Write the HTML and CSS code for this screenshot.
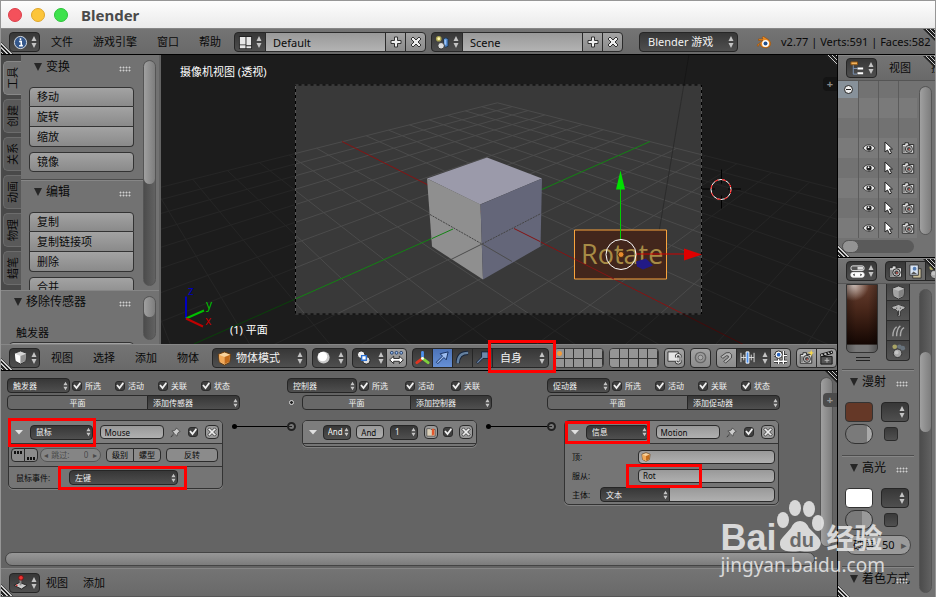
FILE: index.html
```html
<!DOCTYPE html>
<html lang="zh-CN">
<head>
  <meta charset="UTF-8">
  <meta name="viewport" content="width=device-width, initial-scale=1.0">
  <title>Blender</title>
  <link rel="stylesheet" href="styles.css">
</head>
<body>
  <!-- Icon sprites -->
  <svg class="sprites" aria-hidden="true">
    <symbol id="updown" viewBox="0 0 6 14"><path d="M3 1 5.5 6h-5zM3 13 .5 8h5z" fill="#c4c4c4"/></symbol>
    <symbol id="info" viewBox="0 0 16 16"><circle cx="8" cy="8" r="6.5" fill="#35588c" stroke="#d8dfe8"/><path d="M6.5 7h2.300v4h1.200M6.500 11.500h4M8 3.500v2" fill="none" stroke="#fff" stroke-width="1.600"/></symbol>
    <symbol id="screens" viewBox="0 0 16 16"><path d="M1 1h14v14H1z" fill="#222"/><path d="M2 2h6v8H2zM2 11h6v3H2zM9 2h5v9H9zM9 12h5v2H9z" fill="#e8e8e8"/></symbol>
    <symbol id="scene" viewBox="0 0 16 16"><circle cx="4" cy="4" r="3" fill="#c9c157" opacity=".8"/><circle cx="4" cy="4" r="1.500" fill="#fff8b0"/><path d="M9 4q2.500-2 5 0v8q-2.500 2-5 0z" fill="#4b82c8" stroke="#234"/><path d="M10 4.500q1 1 2 0v6h-2z" fill="#9cc3f2"/><circle cx="6.500" cy="11.500" r="3.500" fill="#ddd" stroke="#333"/></symbol>
    <symbol id="world" viewBox="0 0 16 16"><circle cx="4" cy="4" r="2.500" fill="#a9a566"/><circle cx="9" cy="4" r="2.500" fill="#68737c"/><circle cx="12.500" cy="5.500" r="2.500" fill="#68737c"/><circle cx="7" cy="11" r="4.500" fill="#a8a8a8" stroke="#333"/><circle cx="6" cy="10" r="2" fill="#c4c4c4"/></symbol>
    <symbol id="plus" viewBox="0 0 12 12"><path d="M4.500 1h3v3.500H11v3H7.500V11h-3V7.500H1v-3h3.500z" fill="#eee" stroke="#333"/></symbol>
    <symbol id="cross" viewBox="0 0 12 12"><path d="M3 1 6 4l3-3 2 2-3 3 3 3-2 2-3-3-3 3-2-2 3-3-3-3z" fill="#eee" stroke="#333"/></symbol>
    <symbol id="logo" viewBox="0 0 16 14"><path d="M1 10 7 5.500H2.500V4H7L6 2.500 7.500 1.500 13 5q3 3 1 6-3 3-7 1.500-3-1.500-3-4L2 11.500z" fill="#e98a24" stroke="#8d4a0b" stroke-width=".6"/><circle cx="9.500" cy="8.500" r="3.500" fill="#fff"/><circle cx="9.500" cy="8.500" r="2" fill="#23508c"/></symbol>
    <symbol id="cube" viewBox="0 0 16 16"><path d="M8 1l6.500 2.500L13.500 12 8 15l-5.500-3L1.500 3.500z" fill="#d5d5d5" stroke="#333"/><path d="M2 4l6 2.500V14l-5-2.500z" fill="#fff"/><path d="M14 4 8 6.500V14l5-2.500z" fill="#909090"/></symbol>
    <symbol id="cube-grey" viewBox="0 0 16 16"><path d="M8 1l6.500 2.500L13.500 12 8 15l-5.500-3L1.500 3.500z" fill="#bdbdbd" stroke="#333"/><path d="M2 4l6 2.500V14l-5-2.500z" fill="#a3a3a3"/><path d="M14 4 8 6.500V14l5-2.500z" fill="#838383"/></symbol>
    <symbol id="cube-orange" viewBox="0 0 16 16"><path d="M8 1l6.500 2.500L13.500 12 8 15l-5.500-3L1.500 3.500z" fill="#f8d29c" stroke="#6b3a08"/><path d="M2 4l6 2.500V14l-5-2.500z" fill="#f2a958"/><path d="M14 4 8 6.500V14l5-2.500z" fill="#c26b1c"/></symbol>
    <symbol id="ball" viewBox="0 0 16 16"><circle cx="8" cy="8" r="6.500" fill="#c9c9c9"/><circle cx="7" cy="7" r="5" fill="#fff"/></symbol>
    <symbol id="pivot" viewBox="0 0 16 16"><circle cx="5.500" cy="5" r="4" fill="#eee" stroke="#222"/><circle cx="11" cy="11" r="4" fill="#ddd" stroke="#222"/><path d="M6 6h5v5H6z" fill="#fff" stroke="#2b6fd0" stroke-width="1.500"/></symbol>
    <symbol id="centers" viewBox="0 0 16 16"><g fill="#9cc0f0" stroke="#223c66"><circle cx="3" cy="3" r="1.500"/><circle cx="8" cy="3" r="1.500"/><circle cx="13" cy="3" r="1.500"/></g><path d="M.7 10.500 5 6.500v2.500h6V6.500l4.300 4L11 14.500V12H5v2.500z" fill="#fff" stroke="#222"/></symbol>
    <symbol id="axes" viewBox="0 0 16 16"><g stroke-width="3" stroke-linecap="round"><path d="M8 9V2.500" stroke="#4f92f0"/><path d="M8 9l-6 4.500" stroke="#e2341f"/><path d="M8 9l6 4.500" stroke="#7fd13b"/></g><circle cx="8" cy="9" r="1.500" fill="#fff"/></symbol>
    <symbol id="arrow" viewBox="0 0 16 16"><path d="M1.500 13 8 6.500 5.500 4l8.500-2-2 8.500L9.500 8 3 14.500z" fill="#9dbdf0" stroke="#152f5e"/></symbol>
    <symbol id="arc" viewBox="0 0 16 16"><path d="M3 14Q3 3 14 3" fill="none" stroke="#17243b" stroke-width="4.500"/><path d="M3 14Q3 3 14 3" fill="none" stroke="#64809f" stroke-width="2.500"/></symbol>
    <symbol id="scale" viewBox="0 0 16 16"><path d="M1.500 13 7 7.500V2h7v7H8.500L3 14.500z" fill="#6f89aa" stroke="#17243b"/></symbol>
    <symbol id="lock" viewBox="0 0 16 16"><path d="M1 2h11v10H1z" fill="#e4e4e4" stroke="#333"/><path d="M10 8V6q2-2 4 0v2M10 12v1q2 2 4 0v-2" fill="none" stroke="#333" stroke-width="3"/><path d="M10 8V6q2-2 4 0v2M12 8v4M10 12v1q2 2 4 0v-2" fill="none" stroke="#eee" stroke-width="1.200"/></symbol>
    <symbol id="rings" viewBox="0 0 16 16"><circle cx="8" cy="8" r="5.500" fill="none" stroke="#666" stroke-width="1.500"/><circle cx="8" cy="8" r="2.500" fill="#aaa" stroke="#6c6c6c"/></symbol>
    <symbol id="magnet" viewBox="0 0 16 16"><path d="M2 7 7.500 3q4-1.500 6 2 1 4-3 6L7 14l-2-2 5-4q1-2-2-2L4 9z" fill="#b5b5b5" stroke="#444"/></symbol>
    <symbol id="snap" viewBox="0 0 16 16"><path d="M1 3v10M4 5v6M12 5v6M15 3v10M1 8h14" stroke="#ddd"/><path d="M6.500 2h3v12h-3z" fill="#4b90ee" stroke="#fff"/></symbol>
    <symbol id="grid-snap" viewBox="0 0 16 16"><path d="M6 1v14M11 1v14M1 6h14M1 12h14" stroke="#222" stroke-width="3"/><path d="M6 1v14M11 1v14M1 6h14M1 12h14" stroke="#fff" stroke-width="1.500"/><circle cx="6" cy="5" r="4" fill="#fff" stroke="#222"/><circle cx="6" cy="5" r="2" fill="#2a66c0"/></symbol>
    <symbol id="camera" viewBox="0 0 16 16"><path d="M1.500 4h3V2h4v2h6v10h-13z" fill="#ddd" stroke="#222"/><path d="M2 6h3v7H2z" fill="#888"/><circle cx="9" cy="9" r="4" fill="#bbb" stroke="#222"/><circle cx="9" cy="9" r="2.200" fill="#444"/><circle cx="9.500" cy="9.500" r="1" fill="#c9574f"/></symbol>
    <symbol id="render" viewBox="0 0 16 16"><use href="#camera" width="15" height="15" y="1"/><path d="M13 0l1 2.500 2 .5-2 1-1 3-1-3-3-1 3-.5z" fill="#f7d94a"/></symbol>
    <symbol id="clapper" viewBox="0 0 16 16"><path d="M2 7h12v8H2z" fill="#555" stroke="#111"/><path d="M1.500 4.500 14 1l.5 2.500L2 7z" fill="#eee" stroke="#111"/><path d="M4 4l2 2M8 3l2 2M11 2l2 2" stroke="#111" stroke-width="1.500"/><path d="M6 11h5M8.500 8.500v5" stroke="#bbb"/></symbol>
    <symbol id="tree" viewBox="0 0 16 16"><path d="M3.500 4v10h4M3.500 8h4" fill="none" stroke="#7b93b5"/><path d="M1 1h7v3H1z" fill="#f3b45e" stroke="#8a5010"/><path d="M8 7h6v2H8zM8 12h6v2H8z" fill="#fff"/></symbol>
    <symbol id="buttons" viewBox="0 0 16 16"><rect x="1" y="2" width="14" height="5" rx="2" fill="#555" stroke="#eee"/><rect x="8" y="3" width="6" height="3" fill="#ddd"/><rect x="1" y="9" width="14" height="5" rx="2" fill="#fff" stroke="#eee"/><path d="M5 10 3 11.500 5 13zM11 10l2 1.500-2 1.500z" fill="#333"/></symbol>
    <symbol id="photos" viewBox="0 0 16 16"><path d="M5 5h9v10H5z" fill="#c9bd97" stroke="#333"/><path d="M2 1h9v11H2z" fill="#d8e3f2" stroke="#333"/><circle cx="7" cy="5" r="2" fill="#527bb3"/><path d="M3 11l3-3 4 3z" fill="#555"/></symbol>
    <symbol id="monkey" viewBox="0 0 16 16"><path d="M4 3q4-3 8 0 3 0 3 2t-3 2l-2 2v5H7V9L5 7Q1 7 1 5t3-2z" fill="#b5b5b5" stroke="#333"/><path d="M6 5v1M10 5v1M8 8v5" stroke="#333"/></symbol>
    <symbol id="hair" viewBox="0 0 16 16"><path d="M2 14Q2 7 6 4M6 14q0-8 4-11M10 14q0-7 4-9" fill="none" stroke="#aaa" stroke-width="1.500"/></symbol>
    <symbol id="joystick" viewBox="0 0 16 16"><path d="M1 11l6-3 8 3-6 4z" fill="#ccc" stroke="#222"/><path d="M8 4v7" stroke="#888" stroke-width="2"/><circle cx="8.500" cy="3" r="2.500" fill="#e33" stroke="#711"/><circle cx="4" cy="11" r="1" fill="#d33"/></symbol>
    <symbol id="eye" viewBox="0 0 16 12"><path d="M1 6q7-8 14 0-7 8-14 0z" fill="#eee" stroke="#333"/><circle cx="8" cy="6" r="3" fill="#222"/><circle cx="7.500" cy="5" r="1" fill="#fff"/></symbol>
    <symbol id="pointer" viewBox="0 0 10 14"><path d="M1 1v10l2.500-2 2 4 2-1-2-4h3z" fill="#fff" stroke="#222"/></symbol>
    <symbol id="pin" viewBox="0 0 12 12"><path d="M7 1l4 4-1.500.5L8 7.500l-.5 2.500L5 7.500 1 11l3.500-4.500L2 4.500 4.500 4l2-1.500z" fill="#ccc" stroke="#333" stroke-width=".7"/></symbol>
    <symbol id="expand" viewBox="0 0 8 6"><path d="M0 1h8L4 5.500z" fill="#e0e0e0"/></symbol>
    <symbol id="bookmark" viewBox="0 0 12 12"><path d="M1 2h4l1 1h5v8H1z" fill="#dcd0b8" stroke="#555"/><path d="M7 2h3v9L8.500 9 7 11z" fill="#e2562a"/></symbol>
  </svg>

  <header class="titlebar">
    <span class="light close"></span>
    <span class="light minimize"></span>
    <span class="light zoom"></span>
    <h1>Blender</h1>
  </header>

  <nav class="bar info-bar">
    <button class="dark editor" aria-label="编辑器"><svg class="icon"><use href="#info"/></svg><svg class="updown"><use href="#updown"/></svg></button>
    <div class="menus">
      <a href="#">文件</a><a href="#">游戏引擎</a><a href="#">窗口</a><a href="#">帮助</a>
    </div>
    <div class="joined">
      <button class="dark editor" aria-label="屏幕"><svg class="icon"><use href="#screens"/></svg><svg class="updown"><use href="#updown"/></svg></button>
      <input class="name" type="text" value="Default" aria-label="屏幕名称">
      <button class="light-btn tool" aria-label="添加屏幕"><svg class="sign"><use href="#plus"/></svg></button>
      <button class="light-btn tool" aria-label="删除屏幕"><svg class="sign"><use href="#cross"/></svg></button>
    </div>
    <div class="joined">
      <button class="dark editor" aria-label="场景"><svg class="icon"><use href="#scene"/></svg><svg class="updown"><use href="#updown"/></svg></button>
      <input class="name" type="text" value="Scene" aria-label="场景名称">
      <button class="light-btn tool" aria-label="添加场景"><svg class="sign"><use href="#plus"/></svg></button>
      <button class="light-btn tool" aria-label="删除场景"><svg class="sign"><use href="#cross"/></svg></button>
    </div>
    <select class="drop engine" aria-label="引擎"><option>Blender 游戏</option></select>
    <svg class="logo"><use href="#logo"/></svg>
    <span class="stats">v2.77 | Verts:591 | Faces:582</span>
    <i class="corner top"></i><i class="corner bottom"></i>
  </nav>

  <main class="workspace">
    <div class="left">
      <section class="view3d">
        <aside class="shelf">
          <div class="tools">
            <div class="tabs">
              <button class="active">工具</button><button>创建</button><button>关系</button><button>动画</button><button>物理</button><button>蜡笔</button>
            </div>
            <div class="tool-panels">
              <div class="panel">
                <h2>变换<i class="grip"></i></h2>
                <div class="stack"><button>移动</button><button>旋转</button><button>缩放</button></div>
                <div class="stack"><button>镜像</button></div>
              </div>
              <div class="panel">
                <h2>编辑<i class="grip"></i></h2>
                <div class="stack"><button>复制</button><button>复制链接项</button><button>删除</button></div>
                <div class="stack"><button>合并</button></div>
              </div>
            </div>
            <div class="scroll"><i class="thumb tall"></i></div>
          </div>
          <div class="operator">
            <div class="operator-body">
              <h2>移除传感器<i class="grip"></i></h2>
              <p>触发器</p>
              <div class="stack"><button aria-label="触发器"></button></div>
            </div>
            <div class="scroll"><i class="thumb short"></i></div>
          </div>
        </aside>
        <div class="viewport">
          <svg class="scene" viewBox="161 55 676 290" preserveAspectRatio="xMidYMid slice">
            <g id="floor"></g>
            <path d="M689 55 656 250" stroke="#2c2c2c"/>
            <path d="M342 142 872 410" stroke="#861313"/>
            <path d="M650 142 194 344.500" stroke="#138313"/>
            <!-- Cube -->
            <path d="M487 158 542 179 480 205 427 179z" fill="#9b9aaa"/>
            <path d="M427 179 480.500 205 483 280 432 247z" fill="#8f8f8f"/>
            <path d="M542 179 480.500 205 483 280 540.500 247z" fill="#646679"/>
            <path d="M430 215 482 244.500 541 214" class="hidden-edge"/>
            <path d="M482 244.500 451 260M482 244.500 512 262" stroke="#4c4c4c"/>
            <path d="M453 229.500 432 239" stroke="#138313"/><path d="M514 229 540 242" stroke="#861313"/>
            <!-- Text object with the translate manipulator -->
            <path d="M574.500 230.500h92v49h-92z" fill="#42261c" stroke="#f8a33c"/>
            <text x="581" y="264" class="object-text">Rotate</text>
            <path d="M574.500 259.600 614 279.500" stroke="#861313"/>
            <path d="M636 262l10-3 7 7-10 4-6-3z" fill="#221a86"/>
            <circle cx="621" cy="255" r="3" fill="#e68a2e" stroke="#4a2a0a"/>
            <path d="M636 254.500h50" stroke="#d00000"/>
            <path d="M620.500 240v-52" stroke="#00d000"/><path d="M620.500 171l4.500 19h-9z" fill="#00e000"/>
            <circle cx="621" cy="255" r="15" fill="none" stroke="#fff"/>
            <!-- Area outside the camera frame -->
            <path d="M-400-400h1800v1200H-400zM295 85v230h407V85z" fill="#000" fill-opacity=".5" fill-rule="evenodd"/>
            <path d="M295.500 85.500h406v229h-406z" fill="none" stroke="#000"/>
            <path d="M295.500 85.500h406v229h-406z" fill="none" stroke="#555" stroke-dasharray="3 3"/>
            <path d="M684 249l18 6-18 6z" fill="#e00000"/>
            <!-- 3D cursor -->
            <path d="M721.500 170v14M721.500 196v13M702 189.500h13M728 189.500h13" stroke="#000"/>
            <circle cx="721" cy="190" r="10" fill="none" stroke="#fff"/>
            <circle cx="721" cy="190" r="10" fill="none" stroke="#f00" stroke-dasharray="4 4"/>
            <g stroke-width="2"><path d="M186 319v-22" stroke="#0000c0"/><path d="M186 319l18-8" stroke="#00c000"/><path d="M186 319l17 8" stroke="#c00000"/></g>
            <text x="188" y="295" class="axis" fill="#0000c0">z</text>
            <text x="206" y="309" class="axis" fill="#00c000">y</text>
            <text x="205" y="325" class="axis" fill="#c00000">x</text>
          </svg>
          <span class="view-name">摄像机视图 (透视)</span>
          <span class="object-name">(1) 平面</span>
          <button class="expander" aria-label="展开">+</button>
          <i class="corner top"></i>
        </div>
      </section>

      <nav class="bar view-bar">
        <button class="dark editor" aria-label="编辑器"><svg class="icon"><use href="#cube"/></svg><svg class="updown"><use href="#updown"/></svg></button>
        <div class="menus">
          <a href="#">视图</a><a href="#">选择</a><a href="#">添加</a><a href="#">物体</a>
        </div>
        <div class="mode"><svg class="icon"><use href="#cube-orange"/></svg><select class="drop" aria-label="模式"><option>物体模式</option></select></div>
        <button class="dark editor wide" aria-label="着色"><svg class="icon"><use href="#ball"/></svg><svg class="updown"><use href="#updown"/></svg></button>
        <div class="joined">
          <button class="dark editor wide" aria-label="轴心"><svg class="icon"><use href="#pivot"/></svg><svg class="updown"><use href="#updown"/></svg></button>
          <button class="light-btn tool" aria-label="中心点"><svg class="icon"><use href="#centers"/></svg></button>
        </div>
        <div class="joined">
          <button class="dark tool" aria-label="操纵器"><svg class="icon"><use href="#axes"/></svg></button>
          <button class="dark tool on" aria-label="移动"><svg class="icon"><use href="#arrow"/></svg></button>
          <button class="dark tool" aria-label="旋转"><svg class="icon"><use href="#arc"/></svg></button>
          <button class="dark tool" aria-label="缩放"><svg class="icon"><use href="#scale"/></svg></button>
          <span class="marked orientation"><select class="drop" aria-label="坐标系"><option>自身</option></select></span>
        </div>
        <div class="layers"><i class="used"></i><i></i><i></i><i></i><i></i><i></i><i></i><i></i><i></i><i></i></div>
        <div class="layers"><i></i><i></i><i></i><i></i><i></i><i></i><i></i><i></i><i></i><i></i></div>
        <button class="light-btn tool" aria-label="锁定"><svg class="icon"><use href="#lock"/></svg></button>
        <button class="light-btn tool" aria-label="衰减"><svg class="icon"><use href="#rings"/></svg></button>
        <div class="joined">
          <button class="light-btn tool" aria-label="吸附"><svg class="icon"><use href="#magnet"/></svg></button>
          <button class="dark editor wide" aria-label="吸附元素"><svg class="icon"><use href="#snap"/></svg><svg class="updown"><use href="#updown"/></svg></button>
          <button class="light-btn tool" aria-label="网格"><svg class="icon"><use href="#grid-snap"/></svg></button>
        </div>
        <div class="joined">
          <button class="light-btn tool" aria-label="渲染"><svg class="icon"><use href="#render"/></svg></button>
          <button class="light-btn tool" aria-label="动画"><svg class="icon"><use href="#clapper"/></svg></button>
        </div>
        <i class="corner bottom"></i>
      </nav>

      <section class="logic">
        <div class="logic-body">
          <div class="column sensors">
            <div class="filters">
              <select class="drop" aria-label="触发器"><option>触发器</option></select>
              <label><input type="checkbox" checked>所选</label><label><input type="checkbox" checked>活动</label><label><input type="checkbox" checked>关联</label><label><input type="checkbox" checked>状态</label>
            </div>
            <div class="adder">
              <button class="object">平面</button><select class="drop" aria-label="添加传感器"><option>添加传感器</option></select>
            </div>
            <div class="brick-row">
              <div class="brick">
                <div class="brick-head">
                  <svg class="expand"><use href="#expand"/></svg>
                  <span class="marked type"><select class="drop" aria-label="类型"><option>鼠标</option></select></span>
                  <input class="field" type="text" value="Mouse" aria-label="名称">
                  <svg class="pin"><use href="#pin"/></svg>
                  <input type="checkbox" checked aria-label="启用">
                  <button class="remove" aria-label="删除"><svg><use href="#cross"/></svg></button>
                </div>
                <div class="brick-line">
                  <div class="joined pulses"><button class="flat" aria-label="真脉冲"><i class="up"></i></button><button class="flat" aria-label="假脉冲"><i></i></button></div>
                  <label class="skip"><span>◂</span> 跳过:<input type="text" value="0"><span>▸</span></label>
                  <div class="joined levels"><button class="flat">级别</button><button class="flat">螺型</button></div>
                  <button class="flat invert">反转</button>
                </div>
                <div class="brick-line">
                  <label class="caption" for="event">鼠标事件:</label>
                  <span class="marked event"><select class="drop" id="event"><option>左键</option></select></span>
                </div>
              </div>
              <i class="link"></i>
            </div>
          </div>

          <div class="column controllers">
            <div class="filters">
              <select class="drop" aria-label="控制器"><option>控制器</option></select>
              <label><input type="checkbox" checked>所选</label><label><input type="checkbox" checked>活动</label><label><input type="checkbox" checked>关联</label>
            </div>
            <div class="adder">
              <i class="state"></i><button class="object">平面</button><select class="drop" aria-label="添加控制器"><option>添加控制器</option></select>
            </div>
            <div class="brick-row">
              <i class="socket"></i>
              <div class="brick">
                <div class="brick-head">
                  <svg class="expand"><use href="#expand"/></svg>
                  <select class="drop tiny" aria-label="类型"><option>And</option></select>
                  <input class="field tiny" type="text" value="And" aria-label="名称">
                  <select class="drop tiny" aria-label="状态"><option>1</option></select>
                  <button class="remove" aria-label="优先"><svg><use href="#bookmark"/></svg></button>
                  <input type="checkbox" checked aria-label="启用">
                  <button class="remove" aria-label="删除"><svg><use href="#cross"/></svg></button>
                </div>
              </div>
              <i class="link"></i>
            </div>
          </div>

          <div class="column actuators">
            <div class="filters">
              <select class="drop" aria-label="促动器"><option>促动器</option></select>
              <label><input type="checkbox" checked>所选</label><label><input type="checkbox" checked>活动</label><label><input type="checkbox" checked>关联</label><label><input type="checkbox" checked>状态</label>
            </div>
            <div class="adder">
              <button class="object">平面</button><select class="drop" aria-label="添加促动器"><option>添加促动器</option></select>
            </div>
            <div class="brick-row">
              <i class="socket"></i>
              <div class="brick">
                <div class="brick-head">
                  <svg class="expand"><use href="#expand"/></svg>
                  <span class="marked type message"><select class="drop" aria-label="类型"><option>信息</option></select></span>
                  <input class="field" type="text" value="Motion" aria-label="名称">
                  <svg class="pin"><use href="#pin"/></svg>
                  <input type="checkbox" checked aria-label="启用">
                  <button class="remove" aria-label="删除"><svg><use href="#cross"/></svg></button>
                </div>
                <div class="brick-form">
                  <div class="form-row"><label for="to">顶:</label><span class="target"><input class="field" id="to" type="text"><svg><use href="#cube-orange"/></svg></span></div>
                  <div class="form-row"><label for="subject">服从:</label><span class="marked subject"><input class="field" id="subject" type="text" value="Rot"></span></div>
                  <div class="form-row"><label for="kind">主体:</label><span class="joined message-body"><select class="drop" id="kind"><option>文本</option></select><input class="field" type="text" aria-label="主体"></span></div>
                </div>
              </div>
            </div>
          </div>
          <div class="scroll logic-scroll"><i class="thumb full"></i></div>
          <button class="expander" aria-label="展开">+</button>
          <i class="corner top"></i>
        </div>
        <div class="hscroll"></div>
        <nav class="bar logic-bar">
          <button class="dark editor" aria-label="编辑器"><svg class="icon"><use href="#joystick"/></svg><svg class="updown"><use href="#updown"/></svg></button>
          <div class="menus"><a href="#">视图</a><a href="#">添加</a></div>
          <i class="corner bottom"></i>
        </nav>
      </section>
    </div>

    <aside class="right">
      <nav class="bar side-bar">
        <button class="dark editor" aria-label="编辑器"><svg class="icon"><use href="#tree"/></svg><svg class="updown"><use href="#updown"/></svg></button>
        <div class="menus"><a href="#">视图</a><a href="#">搜索</a></div>
        <i class="corner top"></i>
      </nav>
      <section class="outliner">
        <div class="outline-rows">
          <div class="row root"><span><i class="collapse"></i></span><span></span><span></span><span></span></div>
          <div class="row"><span></span><span></span><span></span><span></span></div>
          <div class="row"><span></span><span></span><span></span><span></span></div>
          <div class="row"><span></span><span><svg><use href="#eye"/></svg></span><span><svg><use href="#pointer"/></svg></span><span><svg><use href="#camera"/></svg></span></div>
          <div class="row"><span></span><span><svg><use href="#eye"/></svg></span><span><svg><use href="#pointer"/></svg></span><span><svg><use href="#camera"/></svg></span></div>
          <div class="row"><span></span><span><svg><use href="#eye"/></svg></span><span><svg><use href="#pointer"/></svg></span><span><svg><use href="#camera"/></svg></span></div>
          <div class="row"><span></span><span><svg><use href="#eye"/></svg></span><span><svg><use href="#pointer"/></svg></span><span><svg><use href="#camera"/></svg></span></div>
          <div class="row"><span></span><span><svg><use href="#eye"/></svg></span><span><svg><use href="#pointer"/></svg></span><span><svg><use href="#camera"/></svg></span></div>
          <div class="outline-scroll"><i></i></div>
        </div>
        <div class="scroll"><i class="thumb full"></i></div>
        <i class="corner bottom"></i>
      </section>
      <nav class="bar side-bar">
        <button class="dark editor" aria-label="编辑器"><svg class="icon"><use href="#buttons"/></svg><svg class="updown"><use href="#updown"/></svg></button>
        <div class="joined contexts">
          <button class="dark tool" aria-label="渲染"><svg class="icon"><use href="#camera"/></svg></button>
          <button class="dark tool on-grey" aria-label="渲染层"><svg class="icon"><use href="#photos"/></svg></button>
          <button class="dark tool" aria-label="场景"><svg class="icon"><use href="#world"/></svg></button>
        </div>
        <i class="corner top"></i>
      </nav>
      <section class="properties">
        <div class="property-panels">
          <div class="preview-row">
            <div class="preview"></div>
            <div class="shapes">
              <button aria-label="立方体"><svg class="icon"><use href="#cube-grey"/></svg></button>
              <button aria-label="猴头"><svg class="icon"><use href="#monkey"/></svg></button>
              <button aria-label="毛发"><svg class="icon"><use href="#hair"/></svg></button>
              <button aria-label="天空"><svg class="icon"><use href="#world"/></svg></button>
            </div>
          </div>
          <i class="handle"></i>
          <div class="panel">
            <h2>漫射<i class="grip"></i></h2>
            <div class="swatches">
              <button class="swatch brown" aria-label="漫射颜色"></button>
              <button class="dark pick" aria-label="着色器"><svg class="updown"><use href="#updown"/></svg></button>
              <span class="slider diffuse"></span><input type="checkbox" aria-label="渐变">
            </div>
          </div>
          <div class="panel">
            <h2>高光<i class="grip"></i></h2>
            <div class="swatches">
              <button class="swatch white" aria-label="高光颜色"></button>
              <button class="dark pick" aria-label="着色器"><svg class="updown"><use href="#updown"/></svg></button>
              <span class="slider specular"></span><input type="checkbox" aria-label="渐变">
            </div>
            <label class="hardness">硬度:<input type="text" value="50"><span>▸</span></label>
          </div>
          <div class="panel">
            <h2>着色方式<i class="grip"></i></h2>
          </div>
        </div>
        <div class="scroll"><i class="thumb middle"></i></div>
        <i class="corner bottom"></i>
      </section>
    </aside>
  </main>

  <div class="watermark">
    <div class="brand">
      <span class="bai">Bai</span>
      <span class="paw">
        <svg viewBox="0 0 48 54"><ellipse cx="7" cy="21" rx="6" ry="8"/><ellipse cx="19" cy="9" rx="6" ry="8"/><ellipse cx="33" cy="10" rx="6" ry="8"/><ellipse cx="42" cy="24" rx="6" ry="8"/><path d="M24 22q6 0 9 7l9 9q5 6 1 11-4 5-19 3-15 2-19-3-3-6 2-11l8-9q3-7 9-7z"/></svg>
        <b>du</b>
      </span>
      <span class="jingyan">经验</span>
    </div>
    <span class="site">jingyan.baidu.com</span>
  </div>

  <script src="scene.js"></script>
</body>
</html>
```
FILE: styles.css
```css
* {
  box-sizing: border-box;
}

body {
  margin: 0;
  height: 100vh;
  display: flex;
  flex-direction: column;
  position: relative;
  border: 1px solid #969696;
  border-bottom: 0;
  background: #6b6b6b;
  color: #0a0a0a;
  font-family: "Noto Sans", "Noto Sans CJK SC", sans-serif;
  font-size: 11px;
  line-height: 16px;
  overflow: hidden;
}

button, input, select {
  margin: 0;
  padding: 0;
  border: 1px solid #2b2b2b;
  border-radius: 4px;
  color: inherit;
  font: inherit;
  appearance: none;
  min-width: 0;
}

a {
  color: inherit;
  text-decoration: none;
}

h1, h2, p {
  margin: 0;
}

button svg {
  display: block;
}

.sprites {
  position: absolute;
  width: 0;
  height: 0;
}

/* Window title */
.titlebar {
  height: 27px;
  flex: none;
  display: flex;
  align-items: center;
  gap: 9px;
  padding-left: 7px;
  background: linear-gradient(#fdfdfd, #eaeaea);
}

.titlebar h1 {
  margin-left: 4px;
  color: #4a4a4a;
  font-size: 15px;
  line-height: 20px;
}

.light {
  width: 14px;
  height: 14px;
  border-radius: 50%;
}

.close { background: #f4515b; border: 1px solid #dc3f4a; }
.minimize { background: #fcc53a; border: 1px solid #dfa52a; }
.zoom { background: #3ee24c; border: 1px solid #2cc43a; }

/* Shared header bars */
.bar {
  position: relative;
  display: flex;
  align-items: center;
  flex: none;
  height: 27px;
  background: linear-gradient(#747474, #696969);
  border-top: 1px solid #868686;
  border-bottom: 1px solid #000;
  padding-left: 8px;
  white-space: nowrap;
}

.info-bar {
  gap: 5px;
  padding-top: 1px;
}

.menus {
  display: flex;
  gap: 20px;
  padding: 0 10px 0 6px;
}

.info-bar .menus {
  padding-right: 8px;
}

.dark, .drop {
  background-color: #434343;
  background-image: linear-gradient(#373737, #4f4f4f);
  color: #f2f2f2;
  border-color: #262626;
}

.light-btn {
  background: linear-gradient(#a3a3a3, #8c8c8c);
}

.editor {
  display: flex;
  align-items: center;
  gap: 3px;
  flex: none;
  width: 31px;
  height: 20px;
  padding: 0 3px;
}

.editor.wide {
  width: 35px;
  gap: 7px;
}

.tool {
  display: flex;
  align-items: center;
  justify-content: center;
  flex: none;
  width: 21px;
  height: 20px;
}

.icon {
  width: 15px;
  height: 15px;
  flex: none;
}

.sign {
  width: 12px;
  height: 12px;
}

.updown {
  width: 6px;
  height: 14px;
  flex: none;
}

.joined {
  display: flex;
}

.joined > * + * {
  margin-left: -1px;
}

.joined > :not(:first-child) {
  border-top-left-radius: 0;
  border-bottom-left-radius: 0;
}

.joined > :not(:last-child) {
  border-top-right-radius: 0;
  border-bottom-right-radius: 0;
}

.drop {
  height: 20px;
  padding: 0 12px 0 8px;
  background-image: url("data:image/svg+xml,%3Csvg xmlns='http://www.w3.org/2000/svg' width='6' height='14'%3E%3Cpath d='M3 1 5.5 6h-5zM3 13 .5 8h5z' fill='%23c4c4c4'/%3E%3C/svg%3E"), linear-gradient(#373737, #4f4f4f);
  background-repeat: no-repeat;
  background-position: right 3px center, 0 0;
}

.name {
  width: 121px;
  height: 20px;
  padding-left: 7px;
  background: linear-gradient(#999, #b3b3b3);
}

.info-bar .joined .editor {
  width: 32px;
}

.engine {
  width: 99px;
  margin: 0 13px 0 11px;
}

.logo {
  width: 16px;
  height: 14px;
  flex: none;
}

.stats {
  margin-left: 4px;
}

/* Resize hatching in area corners */
.corner {
  position: absolute;
  width: 12px;
  height: 12px;
}

.corner.top {
  top: 0;
  right: 0;
  background: repeating-linear-gradient(45deg, #222 0 1px, #ccc 1px 2px, #222 2px 3px);
  clip-path: polygon(0 0, 100% 0, 100% 100%);
}

.corner.bottom {
  bottom: 0;
  left: 0;
  background: repeating-linear-gradient(45deg, #222 0 1px, #ccc 1px 2px, #222 2px 3px);
  clip-path: polygon(0 0, 100% 100%, 0 100%);
}

/* Workspace */
.workspace {
  display: flex;
  flex: 1;
  min-height: 0;
}

.left {
  flex: 1;
  min-width: 0;
  display: flex;
  flex-direction: column;
}

.right {
  width: 98px;
  flex: none;
  display: flex;
  flex-direction: column;
  border-left: 1px solid #000;
  overflow: hidden;
}

.view3d {
  flex: 1;
  min-height: 0;
  display: flex;
}

/* Tool shelf */
.shelf {
  width: 160px;
  flex: none;
  display: flex;
  flex-direction: column;
  background: #727272;
  border-right: 2px solid #636363;
  overflow: hidden;
}

.tools {
  flex: 1;
  min-height: 0;
  display: flex;
  padding-right: 3px;
}

.tabs {
  width: 20px;
  flex: none;
  padding: 6px 0 0 2px;
  display: flex;
  flex-direction: column;
  gap: 4px;
  background: #494949;
}

.tabs button {
  flex: none;
  height: 34px;
  background: #595959;
  border: 1px solid #6c6c6c;
  border-left: 0;
  border-radius: 0 5px 5px 0;
  writing-mode: vertical-rl;
  text-orientation: sideways;
  transform: rotate(180deg);
}

.tabs .active {
  background: #727272;
  border-color: #888;
}

.tool-panels {
  flex: 1;
  overflow: hidden;
}

.panel {
  padding: 3px 9px 7px 8px;
}

.tool-panels .panel + .panel {
  border-top: 1px solid #4c4c4c;
  box-shadow: inset 0 1px #868686;
}

h2 {
  position: relative;
  display: flex;
  align-items: center;
  font-size: 12px;
  font-weight: normal;
  line-height: 18px;
  white-space: nowrap;
}

h2::before {
  content: "";
  margin: 0 4px 0 5px;
  border: 4px solid transparent;
  border-top: 8px solid #262626;
  border-bottom: 0;
}

/* Drag dots lie over a long title */
.grip {
  position: absolute;
  right: 3px;
  top: 8px;
  width: 12px;
  height: 6px;
  background: radial-gradient(circle, #d0d0d0 30%, transparent 60%) 0 0 / 3px 3px;
}

.stack {
  display: flex;
  flex-direction: column;
  margin-top: 5px;
}

.panel h2 + .stack {
  margin-top: 11px;
}

.stack button {
  height: 20px;
  padding-left: 7px;
  text-align: left;
  border-color: #333;
  background: linear-gradient(#a3a3a3, #8a8a8a);
}

.stack button + button {
  border-top: 0;
}

.stack button:not(:first-child) {
  border-top-left-radius: 0;
  border-top-right-radius: 0;
}

.stack button:not(:last-child) {
  border-bottom-left-radius: 0;
  border-bottom-right-radius: 0;
}

.operator {
  height: 54px;
  flex: none;
  display: flex;
  padding-right: 3px;
  border-top: 1px solid #868686;
  overflow: hidden;
}

.operator-body {
  flex: 1;
  padding: 2px 9px 0 8px;
}

.operator p {
  margin: 14px 0 0 7px;
}

.operator .stack {
  margin-top: 1px;
}

/* Scroll bars */
.scroll {
  width: 13px;
  flex: none;
  margin: 5px 0 4px;
  border: 1px solid #555;
  border-radius: 7px;
  background: linear-gradient(90deg, #4c4c4c, #616161);
}

.thumb {
  display: block;
  width: 11px;
  border-radius: 6px;
  background: linear-gradient(90deg, #a0a0a0, #7d7d7d);
}

.tall { height: 123px; }
.short { height: 20px; }
.full { height: 100%; }

.middle {
  height: 80px;
  margin-top: 62px;
}

/* Viewport */
.viewport {
  position: relative;
  flex: 1;
  min-width: 0;
  overflow: hidden;
  background: #393939;
}

.scene {
  display: block;
  width: 100%;
  height: 100%;
}

.hidden-edge {
  fill: none;
  stroke: #444;
  stroke-dasharray: 2 1;
}

.object-text {
  fill: #a78b46;
  font-family: "Open Sans", sans-serif;
  font-size: 27px;
}

.axis {
  font-size: 12px;
}

.view-name, .object-name {
  position: absolute;
  color: #fff;
}

.view-name {
  top: 9px;
  left: 19px;
}

.object-name {
  bottom: 6px;
  left: 69px;
}

.expander {
  position: absolute;
  top: 22px;
  right: 0;
  width: 14px;
  height: 14px;
  border: 0;
  border-radius: 4px 0 0 4px;
  background: #141414;
  color: #888;
  font-weight: bold;
  line-height: 12px;
}

/* Viewport header */
.view-bar {
  gap: 5px;
}

.view-bar .menus {
  padding-right: 8px;
}

.mode {
  position: relative;
}

.mode .drop {
  width: 95px;
  padding-left: 23px;
}

.mode .icon {
  position: absolute;
  left: 5px;
  top: 3px;
}

.on {
  background: linear-gradient(#4c73b8, #6690d6);
}

/* Red frame round a control */
.marked {
  position: relative;
  display: flex;
}

.marked::after {
  content: "";
  position: absolute;
  inset: -8px -7px -5px -4px;
  border: 3px solid #f00;
  pointer-events: none;
  z-index: 2;
}

.orientation .drop {
  width: 57px;
  padding-left: 7px;
  border-radius: 0 4px 4px 0;
}

.layers {
  display: grid;
  grid-template-columns: repeat(5, 1fr);
  grid-auto-rows: 10px;
  width: 50px;
  height: 20px;
  flex: none;
  border: 1px solid #3a3a3a;
  border-radius: 4px;
  overflow: hidden;
}

.layers i {
  background: #959595;
  border-right: 1px solid #333;
  border-bottom: 1px solid #333;
}

.layers .used {
  background: radial-gradient(circle, #f29b3c 2px, #959595 3px);
}

/* Logic editor */
.logic {
  flex: none;
  background: #646464;
  font-size: 8px;
  line-height: 12px;
}

.logic-body {
  position: relative;
  display: flex;
  height: 177px;
  padding: 7px 58px 0 6px;
}

.sensors { flex: 280; }
.controllers { flex: 260; }
.actuators { flex: 232; }

.column {
  min-width: 0;
}

.logic .drop {
  height: 15px;
  padding: 0 8px 0 5px;
  background-size: 5px 10px, auto;
  background-position: right 1px center, 0 0;
}

.filters {
  display: flex;
  align-items: center;
  gap: 14px;
  color: #f0f0f0;
}

.filters .drop {
  width: 63px;
  margin-right: -12px;
}

.controllers .filters .drop {
  width: 70px;
}

.controllers .filters {
  gap: 17px;
}

.controllers .filters .drop {
  margin-right: -15px;
}

.filters label {
  display: flex;
  align-items: center;
  gap: 3px;
}

input[type="checkbox"] {
  width: 10px;
  height: 10px;
  flex: none;
  border-radius: 3px;
  background: linear-gradient(#3a3a3a, #505050);
}

input[type="checkbox"]:checked {
  background: url("data:image/svg+xml,%3Csvg xmlns='http://www.w3.org/2000/svg' viewBox='0 0 10 10'%3E%3Cpath d='M2 4l2.500 3L9 1' fill='none' stroke='%23f0f0f0' stroke-width='1.800'/%3E%3C/svg%3E") center / 10px no-repeat border-box, #404040;
}

.adder {
  display: flex;
  align-items: center;
  width: 233px;
  margin-top: 2px;
}

.adder .object {
  flex: 1;
  height: 15px;
  border-radius: 4px 0 0 4px;
  background: #686868;
  color: #f0f0f0;
}

.adder .drop {
  width: 93px;
  margin-left: -1px;
  border-radius: 0 4px 4px 0;
}

.controllers .adder {
  width: 205px;
}

.controllers .adder .drop {
  width: 82px;
}

.state {
  width: 5px;
  height: 5px;
  margin: 0 8px 0 2px;
  border: 1px solid #ddd;
  border-radius: 50%;
  background: #222;
}

.brick-row {
  display: flex;
  align-items: flex-start;
  margin-top: 10px;
}

.brick {
  width: 215px;
  flex: none;
  border: 1px solid #333;
  border-radius: 5px;
  background: #757575;
  box-shadow: 0 1px #808080;
}

.sensors .brick {
  margin-left: 1px;
}

.controllers .brick {
  width: 175px;
  padding-bottom: 2px;
}

.brick-head {
  display: flex;
  align-items: center;
  justify-content: space-between;
  height: 23px;
  padding: 0 3px 0 6px;
  border-bottom: 1px solid #333;
  border-radius: 4px 4px 0 0;
  background: #7d7d7d;
}

.expand {
  width: 8px;
  height: 6px;
}

.type .drop {
  width: 63px;
}

.type::after {
  inset: -7px -3px -7px -22px;
}

.message::after {
  inset: -4px -1px -4px -21px;
}

.field {
  width: 64px;
  height: 14px;
  padding-left: 4px;
  background: linear-gradient(#999, #b0b0b0);
}

.tiny {
  width: 28px;
}

.logic .drop.tiny {
  padding: 0 6px 0 4px;
}

.pin {
  width: 11px;
  height: 11px;
}

.remove {
  width: 14px;
  height: 14px;
  padding: 1px;
  background: #9a9a9a;
}

.remove svg {
  width: 10px;
  height: 10px;
}

.brick-line {
  display: flex;
  align-items: center;
  height: 22px;
  padding: 0 4px 0 2px;
  gap: 5px;
}

.brick-line + .brick-line {
  border-top: 1px solid #333;
  padding-left: 7px;
}

.flat {
  height: 14px;
  background: #8b8b8b;
}

.pulses button {
  width: 14px;
  padding: 0 1px 0 2px;
}

.pulses i {
  display: block;
  height: 3px;
  margin-top: 6px;
  background: repeating-linear-gradient(90deg, #111 0 2px, transparent 2px 3px);
}

.pulses .up {
  margin-top: -4px;
}

.skip {
  display: flex;
  align-items: center;
  justify-content: space-between;
  width: 61px;
  height: 14px;
  padding: 0 3px;
  margin-left: -3px;
  border: 1px solid #555;
  border-radius: 7px;
  background: #858585;
  color: #4a4a4a;
}

.skip input {
  width: 6px;
  border: 0;
  background: none;
  margin-left: 11px;
}

.levels button {
  width: 28px;
}

.invert {
  flex: 1;
}

.caption {
  width: 48px;
}

.event .drop {
  width: 109px;
}

.event::after {
  inset: -4px -9px -5px -11px;
}

.link {
  position: relative;
  flex: 1;
  height: 1px;
  margin: 6px 0 0 9px;
  background: #000;
}

.link::before {
  content: "";
  position: absolute;
  left: 0;
  top: -2px;
  width: 5px;
  height: 5px;
  border-radius: 50%;
  background: #000;
}

.socket {
  width: 9px;
  height: 9px;
  flex: none;
  margin: 2px 6px 0 0;
  border: 2px solid #222;
  border-radius: 50%;
  background: linear-gradient(#222, #222) 0 50% / 3px 1px no-repeat #777;
}

.actuators .socket {
  margin-right: 8px;
}

.brick-form {
  display: flex;
  flex-direction: column;
  gap: 4px;
  padding: 5px 3px 2px 7px;
}

.form-row {
  display: flex;
  align-items: center;
  justify-content: space-between;
  height: 15px;
}

.target, .subject {
  position: relative;
  width: 137px;
}

.target .field, .subject .field {
  width: 137px;
  display: block;
}

.target svg {
  position: absolute;
  left: 3px;
  top: 2px;
  width: 10px;
  height: 10px;
}

.subject::after {
  inset: -5px 73px -5px -12px;
}

.message-body {
  width: 175px;
}

.message-body .drop {
  width: 70px;
}

.message-body .field {
  flex: 1;
  height: 15px;
}

.logic-scroll {
  position: absolute;
  top: 1px;
  right: 4px;
  bottom: -3px;
}

.logic .expander {
  background: #4b4b4b;
  color: #999;
  font-size: 11px;
}

.hscroll {
  height: 14px;
  margin: 4px 22px 2px 4px;
  border: 1px solid #444;
  border-radius: 7px;
  background: linear-gradient(#979797, #7c7c7c);
}

.logic-bar {
  height: 29px;
  border-bottom: 1px solid #555;
  font-size: 11px;
  line-height: 16px;
}

.logic-bar .menus {
  gap: 15px;
}

/* Outliner */
.side-bar {
  height: 26px;
  border-bottom: 1px solid #555;
  overflow: hidden;
}

.side-bar .menus {
  padding-left: 12px;
}

.outliner {
  position: relative;
  display: flex;
  flex: none;
  height: 177px;
  padding-right: 3px;
  border-bottom: 1px solid #000;
  background: #727272;
}

.outline-rows {
  flex: 1;
  padding-right: 2px;
}

.row {
  display: grid;
  grid-template-columns: 21px 20px 20px 1fr;
  height: 20px;
}

.row:nth-child(even) {
  background: #7a7a7a;
}

.row.root {
  height: 17px;
}

.root span:first-child {
  background: #87919a;
}

.row span {
  display: flex;
  align-items: center;
  justify-content: center;
  border-right: 1px solid #5c5c5c;
}

.row span:last-child {
  border: 0;
}

.row svg {
  width: 14px;
  height: 14px;
}

.collapse {
  width: 9px;
  height: 9px;
  border: 1px solid #222;
  border-radius: 50%;
  background: linear-gradient(#222, #222) center / 5px 1px no-repeat #eee;
}

.outline-scroll {
  width: 72px;
  height: 13px;
  margin: 2px 0 0 4px;
  border-radius: 7px;
  background: #5a5a5a;
}

.outline-scroll i {
  display: block;
  width: 17px;
  height: 13px;
  border: 1px solid #555;
  border-radius: 7px;
  background: #939393;
}

.outliner .scroll {
  margin-bottom: 22px;
}

/* Material properties */
.contexts {
  margin-left: 8px;
}

.on-grey {
  background: #6b6b6b;
}

.properties {
  position: relative;
  flex: 1;
  min-height: 0;
  display: flex;
  padding-right: 3px;
  background: #727272;
  overflow: hidden;
}

.property-panels {
  flex: 1;
  padding: 0 5px 0 4px;
}

.preview-row {
  display: flex;
  justify-content: space-between;
  padding: 0 4px;
}

.preview {
  width: 32px;
  height: 69px;
  border: 1px solid #333;
  border-radius: 0 0 5px 5px;
  background: linear-gradient(90deg, rgba(0, 0, 0, .25), transparent 30%, transparent 70%, rgba(0, 0, 0, .3)), radial-gradient(circle at 6px 0, #d0c2bb 0, transparent 16px), linear-gradient(#663e2f, #4a281b 35%, #2c150d 65%, #140703 88%, #777 90%);
}

.shapes {
  display: flex;
  flex-direction: column;
}

.shapes button {
  display: flex;
  align-items: center;
  justify-content: center;
  width: 24px;
  height: 20px;
  border-radius: 0;
  border-top: 0;
  background: linear-gradient(#454545, #555);
}

.shapes button:first-child {
  height: 17px;
}

.shapes button:last-child {
  border-radius: 0 0 4px 4px;
}

.handle {
  display: block;
  width: 14px;
  height: 4px;
  margin: -4px 0 8px 14px;
  border-top: 1px solid #222;
  border-bottom: 1px solid #222;
}

.property-panels .panel {
  padding: 3px 3px 11px;
  border-top: 1px solid #4c4c4c;
  box-shadow: inset 0 1px #868686;
}

.swatches {
  display: grid;
  grid-template-columns: 28px 28px;
  gap: 2px 8px;
  align-items: center;
  margin-top: 11px;
}

.swatch, .slider {
  height: 20px;
  border: 1px solid #333;
}

.brown { background: #653827; }
.white { background: #fff; }

.pick {
  display: flex;
  align-items: center;
  justify-content: flex-end;
  height: 20px;
  padding-right: 3px;
}

.slider {
  border-radius: 10px;
}

.diffuse { background: linear-gradient(90deg, #7a7a7a 80%, #aaa 80%); }
.specular { background: linear-gradient(90deg, #7a7a7a 60%, #999 60%); }

.swatches input[type="checkbox"] {
  width: 14px;
  height: 14px;
  margin-left: 3px;
}

.hardness {
  display: flex;
  justify-content: flex-end;
  align-items: center;
  height: 20px;
  margin-top: 5px;
  padding-right: 3px;
  border: 1px solid #444;
  border-radius: 10px;
  background: #9a9a9a;
  gap: 4px;
}

.hardness input {
  width: 15px;
  border: 0;
  background: none;
}

.hardness span {
  color: #555;
}

/* Watermark */
.watermark {
  position: absolute;
  right: 50px;
  bottom: 20px;
  color: #e2e2e2;
  opacity: .92;
  pointer-events: none;
  z-index: 3;
}

.brand {
  display: flex;
  align-items: flex-end;
}

.bai {
  font: bold 36px/30px "Liberation Sans", sans-serif;
}

.paw {
  position: relative;
  width: 50px;
  height: 54px;
}

.paw svg {
  display: block;
  width: 48px;
  height: 54px;
  fill: #e2e2e2;
}

.paw b {
  position: absolute;
  left: 13px;
  bottom: 3px;
  color: #6b6b6b;
  font: bold 20px/20px "Liberation Sans", sans-serif;
}

.jingyan {
  font: bold 28px/32px "Noto Sans CJK SC", sans-serif;
}

.site {
  display: block;
  font-size: 19px;
  line-height: 24px;
}
```
FILE: scene.js
```js
// Draw the floor grid in perspective, origin at the cube centre
const floor = document.getElementById("floor");
const SIZE = 8;

function project(u, v) {
  const w = 1 - 0.0574 * u + 0.0503 * v;
  return [485.3 + (26.1 * u + 28.9 * v) / w, 214.6 + (13.2 * u - 12.7 * v) / w];
}

function addLine(from, to) {
  const line = document.createElementNS("http://www.w3.org/2000/svg", "line");
  line.setAttribute("x1", from[0]);
  line.setAttribute("y1", from[1]);
  line.setAttribute("x2", to[0]);
  line.setAttribute("y2", to[1]);
  line.setAttribute("stroke", "#4b4b4b");
  floor.appendChild(line);
}

for (let i = -SIZE; i <= SIZE; i++) {
  if (i === 0) continue;
  addLine(project(i, -SIZE), project(i, SIZE));
  addLine(project(-SIZE, i), project(SIZE, i));
}
```
